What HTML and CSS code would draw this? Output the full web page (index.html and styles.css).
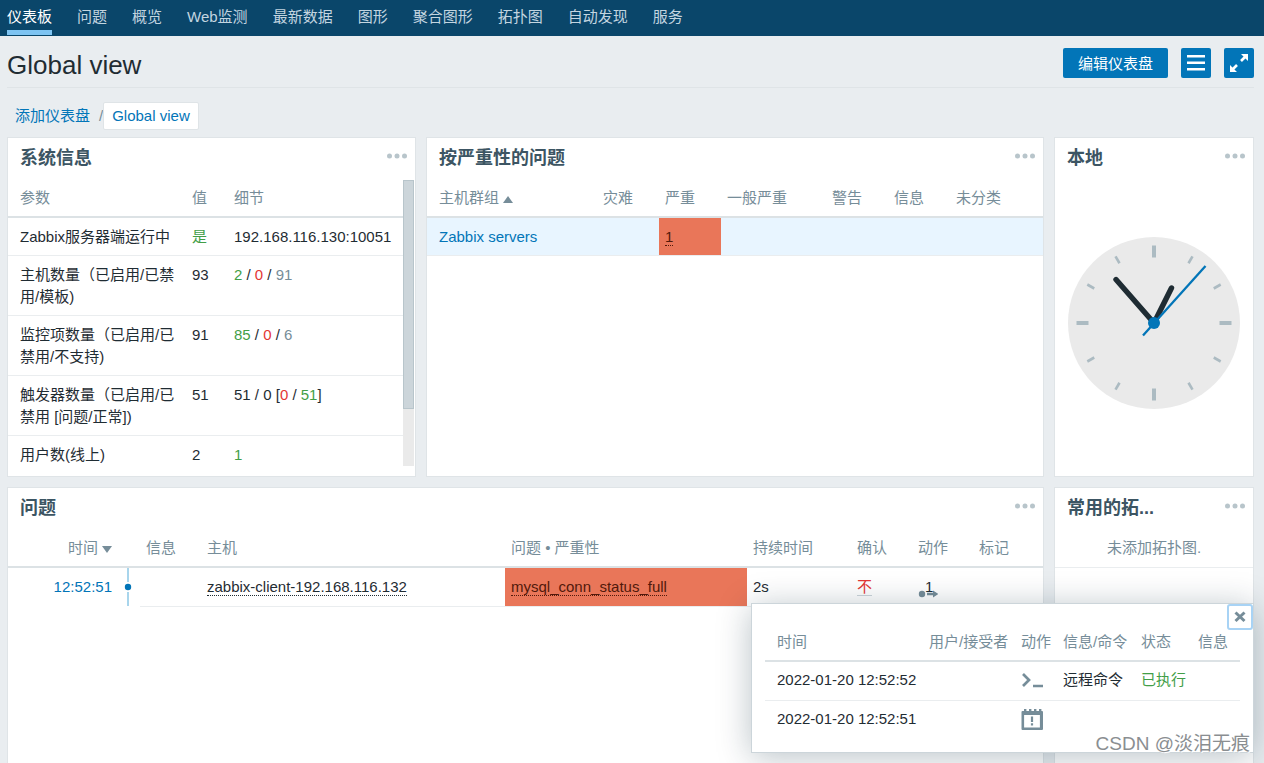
FILE: index.html
```html
<!DOCTYPE html>
<html lang="zh-CN">
<head>
<meta charset="utf-8">
<title>Global view</title>
<link rel="stylesheet" href="styles.css">
</head>
<body>
<nav class="nav">
  <a class="nav-link active" href="#">仪表板</a>
  <a class="nav-link" href="#">问题</a>
  <a class="nav-link" href="#">概览</a>
  <a class="nav-link" href="#">Web监测</a>
  <a class="nav-link" href="#">最新数据</a>
  <a class="nav-link" href="#">图形</a>
  <a class="nav-link" href="#">聚合图形</a>
  <a class="nav-link" href="#">拓扑图</a>
  <a class="nav-link" href="#">自动发现</a>
  <a class="nav-link" href="#">服务</a>
</nav>
<header class="page-head">
  <h1 class="page-title">Global view</h1>
  <div class="page-actions">
    <button class="btn btn-edit" type="button">编辑仪表盘</button>
    <button class="btn btn-icon" type="button" aria-label="菜单">
      <svg width="18" height="16" viewBox="0 0 18 16" fill="#fff"><path d="M0 0h18v2.4H0zM0 6.5h18v2.4H0zM0 13h18v2.4H0z"/></svg>
    </button>
    <button class="btn btn-icon" type="button" aria-label="全屏">
      <svg width="18" height="18" viewBox="0 0 18 18" fill="#fff" stroke="#fff"><path stroke="none" d="M11 0h7v7zM0 11v7h7z"/><path fill="none" stroke-width="2.600" d="M11 7l4-4M7 11l-4 4"/></svg>
    </button>
  </div>
</header>
<div class="crumbs">
  <a class="crumb" href="#">添加仪表盘</a><span class="crumb-sep">/</span><a class="crumb crumb-current" href="#">Global view</a>
</div>
<main class="dashboard">
  <section class="widget">
    <div class="widget-head">
      <h2 class="widget-title">系统信息</h2>
      <button class="dots" type="button" aria-label="更多"><svg width="20" height="6" viewBox="0 0 20 6" fill="#b8c5cb"><circle cx="2.500" cy="3" r="2.500"/><circle cx="10" cy="3" r="2.500"/><circle cx="17.500" cy="3" r="2.500"/></svg></button>
    </div>
    <div class="widget-body scroll-body">
      <div class="scroll-content">
        <table class="list">
          <colgroup><col class="c178"><col class="c42"><col></colgroup>
          <thead><tr><th>参数</th><th>值</th><th>细节</th></tr></thead>
          <tbody>
            <tr><td>Zabbix服务器端运行中</td><td class="green">是</td><td>192.168.116.130:10051</td></tr>
            <tr><td>主机数量（已启用/已禁用/模板)</td><td>93</td><td><span class="green">2</span> / <span class="red">0</span> / <span class="grey">91</span></td></tr>
            <tr><td>监控项数量（已启用/已禁用/不支持)</td><td>91</td><td><span class="green">85</span> / <span class="red">0</span> / <span class="grey">6</span></td></tr>
            <tr><td>触发器数量（已启用/已禁用 [问题/正常])</td><td>51</td><td>51 / 0 [<span class="red">0</span> / <span class="green">51</span>]</td></tr>
            <tr><td>用户数(线上)</td><td>2</td><td class="green">1</td></tr>
          </tbody>
        </table>
      </div>
      <div class="track"><div class="thumb"></div></div>
    </div>
  </section>

  <section class="widget">
    <div class="widget-head">
      <h2 class="widget-title">按严重性的问题</h2>
      <button class="dots" type="button" aria-label="更多"><svg width="20" height="6" viewBox="0 0 20 6" fill="#b8c5cb"><circle cx="2.500" cy="3" r="2.500"/><circle cx="10" cy="3" r="2.500"/><circle cx="17.500" cy="3" r="2.500"/></svg></button>
    </div>
    <div class="widget-body">
      <table class="list">
        <colgroup><col><col class="c62"><col class="c62"><col class="c105"><col class="c62"><col class="c62"><col class="c93"></colgroup>
        <thead><tr><th>主机群组<span class="sort sort-up"></span></th><th>灾难</th><th>严重</th><th>一般严重</th><th>警告</th><th>信息</th><th>未分类</th></tr></thead>
        <tbody><tr class="hover"><td><a class="link" href="#">Zabbix servers</a></td><td></td><td class="high"><a class="dotted" href="#">1</a></td><td></td><td></td><td></td><td></td></tr></tbody>
      </table>
    </div>
  </section>

  <section class="widget">
    <div class="widget-head">
      <h2 class="widget-title">本地</h2>
      <button class="dots" type="button" aria-label="更多"><svg width="20" height="6" viewBox="0 0 20 6" fill="#b8c5cb"><circle cx="2.500" cy="3" r="2.500"/><circle cx="10" cy="3" r="2.500"/><circle cx="17.500" cy="3" r="2.500"/></svg></button>
    </div>
    <div class="widget-body clock-body">
      <svg class="clock" viewBox="-86 -86 172 172">
        <circle r="86" fill="#eaeaea"/>
        <g stroke="#acbbc2" stroke-width="4"><path d="M0-77.500v12M0 65.500v12M-77.500 0h12M65.500 0h12"/></g>
        <g stroke="#acbbc2" stroke-width="2.600">
          <path d="M0-77v8" transform="rotate(30)"/><path d="M0-77v8" transform="rotate(60)"/>
          <path d="M0-77v8" transform="rotate(120)"/><path d="M0-77v8" transform="rotate(150)"/>
          <path d="M0-77v8" transform="rotate(210)"/><path d="M0-77v8" transform="rotate(240)"/>
          <path d="M0-77v8" transform="rotate(300)"/><path d="M0-77v8" transform="rotate(330)"/>
        </g>
        <path d="M0 0L-38-43.500M0 0L17.500-35" stroke="#1f2c33" stroke-width="5.400" stroke-linecap="round"/>
        <path d="M-11 12.500L51.500-57" stroke="#0275b8" stroke-width="2.300"/>
        <circle r="6" fill="#0275b8"/>
      </svg>
    </div>
  </section>

  <section class="widget widget-wide widget-last">
    <div class="widget-head">
      <h2 class="widget-title">问题</h2>
      <button class="dots" type="button" aria-label="更多"><svg width="20" height="6" viewBox="0 0 20 6" fill="#b8c5cb"><circle cx="2.500" cy="3" r="2.500"/><circle cx="10" cy="3" r="2.500"/><circle cx="17.500" cy="3" r="2.500"/></svg></button>
    </div>
    <div class="widget-body">
      <table class="list">
        <colgroup><col class="c110"><col class="c22"><col class="c61"><col><col class="c242"><col class="c104"><col class="c61"><col class="c61"><col class="c70"></colgroup>
        <thead><tr><th class="right">时间<span class="sort sort-down"></span></th><th></th><th>信息</th><th>主机</th><th>问题 • 严重性</th><th>持续时间</th><th>确认</th><th>动作</th><th>标记</th></tr></thead>
        <tbody><tr>
          <td class="right bare"><a class="link" href="#">12:52:51</a></td>
          <td class="timeline bare"><svg width="8" height="38" viewBox="0 0 8 38"><path d="M4 0v14M4 24v15" stroke="#a8d5ec" stroke-width="2"/><circle cx="4" cy="19" r="3.200" fill="#0275b8"/></svg></td>
          <td></td>
          <td><a class="dotted" href="#">zabbix-client-192.168.116.132</a></td>
          <td class="high"><a class="dotted" href="#">mysql_conn_status_full</a></td>
          <td>2s</td>
          <td><a class="ack" href="#">不</a></td>
          <td><button class="action" type="button" aria-label="动作 1"><svg width="20" height="8" viewBox="0 0 20 8" fill="#768d99"><circle cx="4" cy="4" r="3.200"/><path d="M9 2.700h6V.4L20.500 4 15 7.600V5.300H9z"/></svg><span class="action-count">1</span></button></td>
          <td></td>
        </tr></tbody>
      </table>
    </div>
  </section>

  <section class="widget widget-last">
    <div class="widget-head">
      <h2 class="widget-title">常用的拓...</h2>
      <button class="dots" type="button" aria-label="更多"><svg width="20" height="6" viewBox="0 0 20 6" fill="#b8c5cb"><circle cx="2.500" cy="3" r="2.500"/><circle cx="10" cy="3" r="2.500"/><circle cx="17.500" cy="3" r="2.500"/></svg></button>
    </div>
    <div class="widget-body"><p class="empty">未添加拓扑图.</p></div>
  </section>
</main>

<div class="popup" role="dialog" aria-label="动作">
  <button class="close" type="button" aria-label="关闭"><svg width="12" height="12" viewBox="0 0 12 12" stroke="#768d99" stroke-width="3"><path d="M1.500 1.500l9 8.500M10.500 1.500l-9 8.500"/></svg></button>
  <table class="list">
    <colgroup><col><col class="c92"><col class="c42"><col class="c78"><col class="c57"><col class="c48"></colgroup>
    <thead><tr><th>时间</th><th>用户/接受者</th><th>动作</th><th>信息/命令</th><th>状态</th><th>信息</th></tr></thead>
    <tbody>
      <tr><td>2022-01-20 12:52:52</td><td></td><td><svg width="22" height="22" viewBox="0 0 22 22" fill="none" stroke="#768d99" stroke-width="2.700"><path d="M2 5l6 6-6 6M12 17h10"/></svg></td><td>远程命令</td><td class="green">已执行</td><td></td></tr>
      <tr><td>2022-01-20 12:52:51</td><td></td><td><svg width="22" height="22" viewBox="0 0 22 22" fill="#768d99"><path fill-rule="evenodd" d="M.500 4q0-1 1-1h1.500V1h2.400v2h2.600V1h2.400v2h2.600V1h2.400v2h2.600V1h2.400v2h.600q1 0 1 1V21q0 1-1 1H1.500q-1 0-1-1zM3.100 7v12.400h15.800V7z"/><path d="M9.900 8.500h2.200v5.500H9.900zM9.900 15.300h2.200v2.200H9.900z"/></svg></td><td></td><td></td><td></td></tr>
    </tbody>
  </table>
</div>
<div class="watermark">CSDN @淡泪无痕</div>
</body>
</html>
```
FILE: styles.css
```css
* { box-sizing: border-box; }

body {
  display: flex;
  flex-direction: column;
  margin: 0;
  height: 100vh;
  overflow: hidden;
  position: relative;
  background: #e9edf0;
  color: #1f2c33;
  font: 15px/22px "Liberation Sans", "Noto Sans CJK SC", sans-serif;
}

a { color: inherit; text-decoration: none; }
button { font: inherit; padding: 0; border: 0; background: none; cursor: pointer; }
svg { display: block; }

.nav {
  display: flex;
  gap: 25px;
  height: 36px;
  padding: 0 7px;
  background: #0a466a;
}
.nav-link {
  height: 35px;
  padding-top: 6px;
  border-bottom: 5px solid transparent;
  color: #c3d5e0;
}
.nav-link.active { color: #fff; border-bottom-color: #7ec4f2; }

.page-head {
  display: flex;
  justify-content: space-between;
  align-items: center;
  height: 52px;
  margin: 0 10px 0 7px;
  border-bottom: 1px solid #dfe4e7;
}
.page-title { margin: 6px 0 0; font-size: 26px; line-height: 30px; font-weight: normal; }
.page-actions { display: flex; gap: 13px; }
.btn {
  display: flex;
  align-items: center;
  justify-content: center;
  height: 30px;
  margin-top: 3px;
  border-radius: 2px;
  background: #0275b8;
  color: #fff;
}
.btn-edit { padding: 2px 15px 0; }
.btn-icon { width: 30px; }

.crumbs { display: flex; align-items: center; height: 49px; padding: 6px 15px 0; }
.crumb { color: #0275b8; }
.crumb-sep { margin-left: 9px; color: #768d99; }
.crumb-current {
  padding: 2px 8px;
  border: 1px solid #dfe4e7;
  border-radius: 2px;
  background: #fff;
}

.dashboard {
  display: grid;
  flex: 1;
  min-height: 0;
  grid-template-columns: 409fr 618fr 200fr;
  grid-template-rows: 340px minmax(0, 1fr);
  gap: 10px;
  margin: 0 10px 0 7px;
}
.widget {
  display: flex;
  flex-direction: column;
  min-width: 0;
  padding-bottom: 10px;
  border: 1px solid #dfe4e7;
  background: #fff;
}
.widget-wide { grid-column: span 2; }
.widget-last { border-bottom: 0; }
.widget-head {
  display: flex;
  justify-content: space-between;
  height: 42px;
  padding: 8px 8px 0 12px;
}
.widget-title { margin: 0; font-size: 18px; line-height: 25px; color: #3c5563; }
.dots { height: 20px; }
.widget-body { flex: 1; min-height: 0; }

.scroll-body { display: flex; }
.scroll-content { flex: 1; overflow: hidden; }
.track { width: 11px; margin-right: 1px; background: #eaeaea; }
.thumb { height: 80%; border: 1px solid #b8c5cb; background: #ccd5da; }

.list { width: 100%; table-layout: fixed; border-collapse: separate; border-spacing: 0; }
.list th, .list td { padding: 8px 6px 7px; text-align: left; vertical-align: top; }
.list th {
  height: 38px;
  padding: 7px 0 7px 6px;
  border-bottom: 2px solid #dce2e5;
  font-weight: normal;
  color: #768d99;
  white-space: nowrap;
}
.list td { border-bottom: 1px solid #eaedef; }
.list th:first-child, .list td:first-child { padding-left: 12px; }
.list .right { text-align: right; padding-right: 6px; }
.list .bare { border-bottom-color: transparent; }
.list .timeline { padding: 0 0 0 6px; }
.hover td { background: #e8f5ff; }
.list .high { background: #e97659; color: #52190b; }

.c22 { width: 22px; }
.c42 { width: 42px; }
.c48 { width: 48px; }
.c57 { width: 57px; }
.c61 { width: 61px; }
.c62 { width: 62px; }
.c70 { width: 70px; }
.c78 { width: 78px; }
.c92 { width: 92px; }
.c93 { width: 93px; }
.c104 { width: 104px; }
.c105 { width: 105px; }
.c110 { width: 110px; }
.c178 { width: 178px; }
.c242 { width: 242px; }

.green { color: #429e47; }
.red { color: #e33734; }
.grey { color: #768d99; }
.link { color: #0275b8; }
.dotted { border-bottom: 1px dotted; }
.ack { color: #e33734; border-bottom: 1px solid #ccd5da; }

.sort { display: inline-block; margin-left: 4px; border: 5px solid transparent; }
.sort-up { border-top: 0; border-bottom: 7px solid #768d99; }
.sort-down { border-bottom: 0; border-top: 7px solid #768d99; }

.action { display: grid; justify-items: start; color: inherit; }
.action > * { grid-area: 1 / 1; }
.action svg { align-self: end; }
.action-count { padding-left: 7px; }

.clock-body { display: flex; align-items: center; justify-content: center; }
.clock { width: 172px; }

.empty {
  margin: 0;
  padding: 7px 12px 8px;
  border-bottom: 1px solid #eaedef;
  text-align: center;
  color: #768d99;
}

.popup {
  position: absolute;
  top: 603px;
  right: 10px;
  width: 503px;
  padding: 20px 13px 12px;
  border: 1px solid #ccd5da;
  background: #fff;
  box-shadow: 0 4px 32px rgba(0, 35, 55, 0.28);
}
.popup td { height: 39px; padding-top: 7px; }
.popup tr:last-child td { border-bottom: 0; }
.close {
  position: absolute;
  top: 0;
  right: 0;
  display: flex;
  align-items: center;
  justify-content: center;
  width: 26px;
  height: 26px;
  padding-bottom: 1px;
  border: 2px solid #a8d3f5;
  border-radius: 3px;
  background: #fff;
}

.watermark {
  position: absolute;
  right: 14px;
  bottom: 6px;
  font-size: 19px;
  line-height: 26px;
  color: #8a8e91;
  text-shadow: 1px 1px #fff;
}
```
